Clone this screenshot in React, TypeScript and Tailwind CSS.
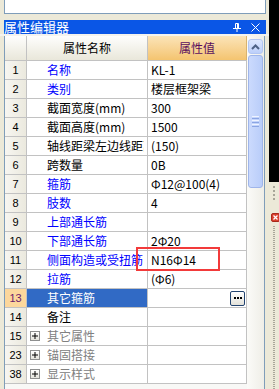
import React from 'react';

type Row = { n: string; name: string; kind: 'blue' | 'black' | 'sel' | 'group'; v?: string };

const rows: Row[] = [
  { n: '1', name: '名称', kind: 'blue', v: 'KL-1' },
  { n: '2', name: '类别', kind: 'blue', v: '楼层框架梁' },
  { n: '3', name: '截面宽度(mm)', kind: 'black', v: '300' },
  { n: '4', name: '截面高度(mm)', kind: 'black', v: '1500' },
  { n: '5', name: '轴线距梁左边线距离', kind: 'black', v: '(150)' },
  { n: '6', name: '跨数量', kind: 'black', v: '0B' },
  { n: '7', name: '箍筋', kind: 'blue', v: 'Φ12@100(4)' },
  { n: '8', name: '肢数', kind: 'blue', v: '4' },
  { n: '9', name: '上部通长筋', kind: 'blue', v: '' },
  { n: '10', name: '下部通长筋', kind: 'blue', v: '2Φ20' },
  { n: '11', name: '侧面构造或受扭筋', kind: 'blue', v: 'N16Φ14' },
  { n: '12', name: '拉筋', kind: 'blue', v: '(Φ6)' },
  { n: '13', name: '其它箍筋', kind: 'sel', v: '' },
  { n: '14', name: '备注', kind: 'black', v: '' },
  { n: '15', name: '其它属性', kind: 'group' },
  { n: '23', name: '锚固搭接', kind: 'group' },
  { n: '38', name: '显示样式', kind: 'group' },
];

function PlusBox() {
  return (
    <div className="w-[10px] h-[10px] border border-[#8e8f8f] bg-linear-to-b from-white to-[#e4e3dc] flex items-center justify-center mr-[7px] shrink-0">
      <svg width="8" height="8" viewBox="0 0 8 8">
        <path d="M1 4H7M4 1V7" stroke="#000" strokeWidth="1" />
      </svg>
    </div>
  );
}

function DotsButton() {
  return (
    <div className="w-[15px] h-[15px] rounded-[2px] border border-[#22436f] bg-linear-to-b from-white to-[#e3e2da] flex items-center justify-center gap-[1px]">
      <div className="w-[2px] h-[2px] bg-black" />
      <div className="w-[2px] h-[2px] bg-black" />
      <div className="w-[2px] h-[2px] bg-black" />
    </div>
  );
}

function GridRow({ r }: { r: Row }) {
  const sel = r.kind === 'sel';
  const nameColor =
    r.kind === 'blue' ? 'text-[#0000ff]' : r.kind === 'group' ? 'text-[#808080]' : sel ? 'text-white' : 'text-black';
  return (
    <div className="flex h-[19px] border-b border-[#c2c2c2]">
      <div
        className={`w-[22px] shrink-0 border-r border-[#c2c2c2] flex items-center justify-center text-[11px] font-['Liberation_Sans',sans-serif] ${
          sel ? 'bg-[#fcd79c] text-[#6b1a6b]' : 'bg-linear-to-r from-[#f7f6f1] to-[#ebe9de] text-black'
        }`}
      >
        {r.n}
      </div>
      <div
        className={`w-[121px] shrink-0 border-r border-[#c2c2c2] flex items-center overflow-hidden whitespace-nowrap text-[12px] leading-[18px] ${nameColor} ${
          sel ? 'bg-[#316ac5]' : 'bg-white'
        } ${r.kind === 'group' ? 'pl-[3px]' : 'pl-[20px]'}`}
      >
        {r.kind === 'group' && <PlusBox />}
        <div className="flex-1 min-w-0 mr-[3px] overflow-hidden">{r.name}</div>
      </div>
      <div className="w-[99px] shrink-0 border-r border-[#c2c2c2] bg-white flex items-center pl-[3px] pr-[1px] whitespace-nowrap overflow-hidden text-[12px] leading-[18px] text-black">
        {sel ? (
          <div className="flex-1 flex justify-end">
            <DotsButton />
          </div>
        ) : (
          <span>{r.v}</span>
        )}
      </div>
    </div>
  );
}

export default function App() {
  return (
    <div className="w-[279px] h-[389px] bg-[#ece9d8] flex overflow-hidden relative font-['Noto_Sans_CJK_SC',sans-serif]">
      <div className="w-[269px] shrink-0 flex flex-col">
        {/* top panel */}
        <div className="h-[20px] pl-[4px] pr-[3px] shrink-0">
          <div className="h-[14px] bg-white border-x border-b border-[#7f9db9]" />
        </div>
        {/* title bar */}
        <div className="ml-[4px] w-[262px] h-[14px] shrink-0 bg-[#0a56e6] flex items-center">
          <span className="text-white text-[13px] leading-[14px] flex-1">属性编辑器</span>
          <svg width="8" height="9" viewBox="0 0 8 9" className="mr-[10px]">
            <path d="M2.5 0.5H5.5M2.5 0.5V5M5.5 0.5V5M0 5.5H8M4 5.5V9" stroke="#fff" strokeWidth="1" fill="none" />
            <path d="M4.5 1V5" stroke="#fff" strokeWidth="1" />
          </svg>
          <svg width="9" height="9" viewBox="0 0 9 9" className="mr-[6px]">
            <path d="M0.5 0.5L8.5 8.5M8.5 0.5L0.5 8.5" stroke="#fff" strokeWidth="1" />
          </svg>
        </div>
        <div className="h-[2px] shrink-0 bg-[#f4f3ee]" />
        {/* grid container */}
        <div className="ml-[4px] w-[261px] flex-1 flex border-l border-r border-[#7f9db9] bg-[#f8f8f6]">
          <div className="w-[242px] shrink-0 flex flex-col">
            {/* header */}
            <div className="flex h-[25px] border-b border-[#c2c2c2] shrink-0">
              <div className="w-[22px] shrink-0 border-r border-[#c2c2c2] bg-linear-to-b from-[#fefefd] to-[#e9e7da]" />
              <div className="w-[121px] shrink-0 border-r border-[#c2c2c2] bg-linear-to-b from-[#fefefd] to-[#e9e7da] flex items-center justify-center text-[12px] text-black">
                属性名称
              </div>
              <div className="w-[99px] shrink-0 border-r border-[#d9b36e] bg-linear-to-b from-[#fbe4b8] to-[#f4c46f] flex items-center justify-center text-[12px] text-[#5a0f5e]">
                属性值
              </div>
            </div>
            {rows.map((r) => (
              <GridRow key={r.n} r={r} />
            ))}
          </div>
          {/* scrollbar */}
          <div className="w-[17px] shrink-0 bg-linear-to-r from-[#fbfbf8] to-[#efeee7] flex flex-col items-center pt-[3px]">
            <div className="w-[15px] h-[15px] rounded-[3px] border border-[#b2c6f3] bg-linear-to-b from-[#dde7fe] to-[#bccffa] flex items-center justify-center">
              <svg width="9" height="6" viewBox="0 0 9 6">
                <path d="M1 5L4.5 1.5L8 5" stroke="#4d6185" strokeWidth="2" fill="none" />
              </svg>
            </div>
            <div className="mt-[1px] w-[15px] h-[133px] rounded-[3px] border border-[#9fb5ea] bg-linear-to-r from-[#cbdafd] to-[#b9cdf9] flex flex-col items-center justify-center gap-[1px]">
              <div className="w-[7px] h-[1px] bg-[#eef3ff]" />
              <div className="w-[7px] h-[1px] bg-[#8ba5e3]" />
              <div className="w-[7px] h-[1px] bg-[#eef3ff]" />
              <div className="w-[7px] h-[1px] bg-[#8ba5e3]" />
              <div className="w-[7px] h-[1px] bg-[#eef3ff]" />
              <div className="w-[7px] h-[1px] bg-[#8ba5e3]" />
            </div>
          </div>
        </div>
      </div>
      {/* right edge */}
      <div className="w-[10px] shrink-0 flex flex-col">
        <div className="h-[182px] bg-black shrink-0" />
        <div className="h-[4px]" />
        <div className="ml-[4px] w-[2px] h-[15px] bg-[image:repeating-linear-gradient(to_bottom,#a8a699_0px,#a8a699_2px,transparent_2px,transparent_4px)]" />
        <div className="h-[12px]" />
        <div className="ml-[2px] w-[9px] h-[9px] rounded-[2px] bg-[#d9412f] border border-[#a82a1c] flex items-center justify-center">
          <svg width="5" height="5" viewBox="0 0 5 5">
            <path d="M0.5 0.5L4.5 4.5M4.5 0.5L0.5 4.5" stroke="#fff" strokeWidth="1.3" />
          </svg>
        </div>
        <div className="h-[4px]" />
        <div className="ml-[4px] w-[2px] flex-1 bg-[image:repeating-linear-gradient(to_bottom,#a8a699_0px,#a8a699_1px,transparent_1px,transparent_2px)]" />
      </div>
      {/* annotation highlight */}
      <div className="absolute left-[136px] top-[247px] w-[84px] h-[24px] border-2 border-[#f23a3a]" />
    </div>
  );
}
